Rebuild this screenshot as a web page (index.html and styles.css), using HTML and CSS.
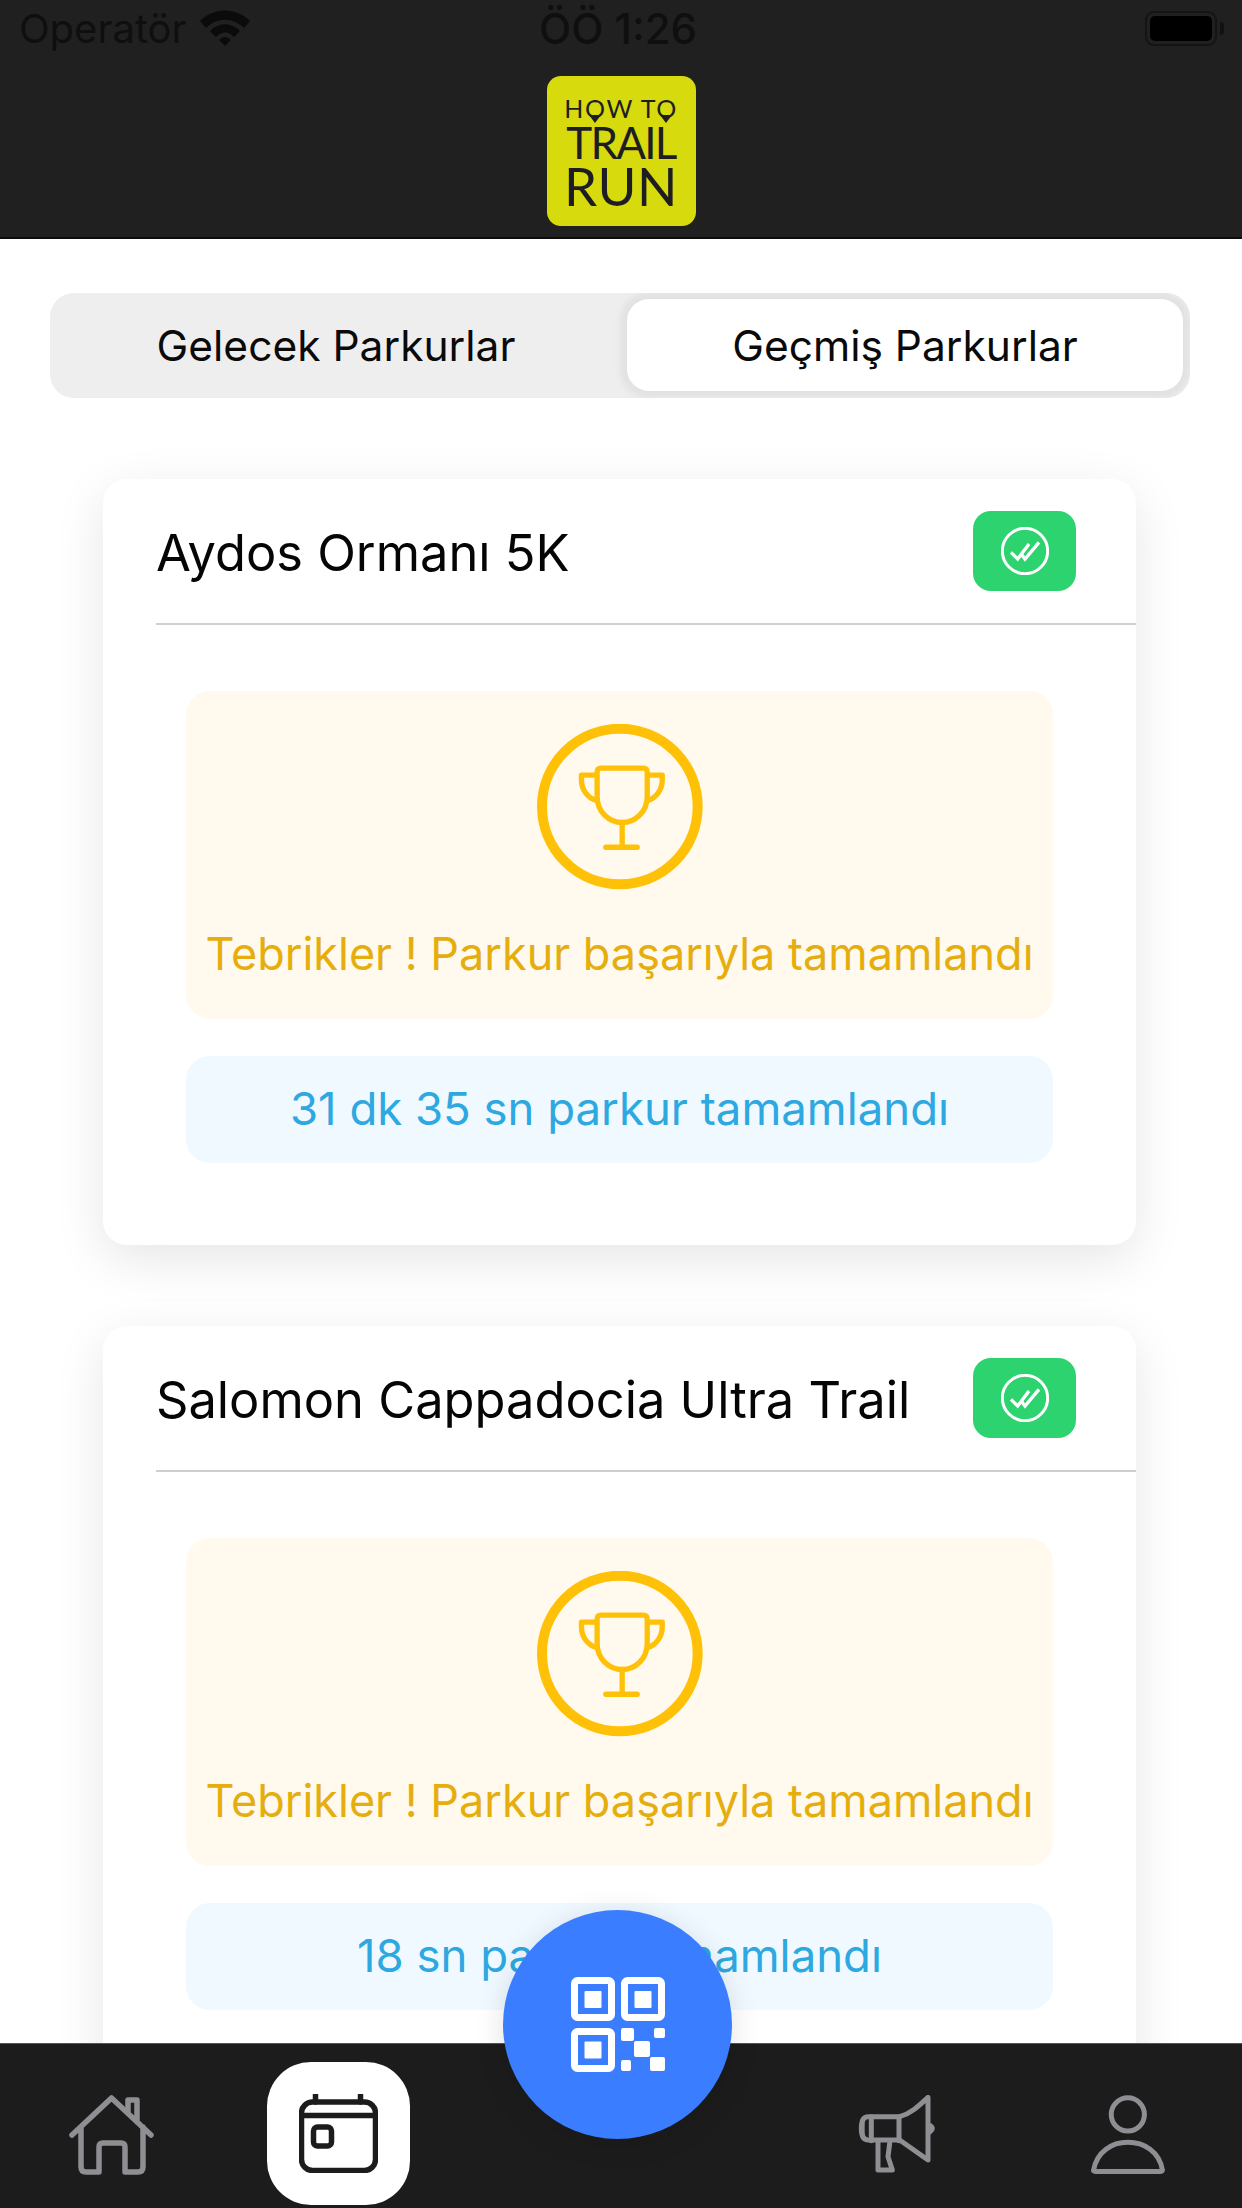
FILE: index.html
```html
<!DOCTYPE html>
<html lang="tr">
<head>
  <meta charset="UTF-8">
  <title>How To Trail Run</title>
  <link rel="stylesheet" href="styles.css">
</head>
<body>
  <svg class="defs" width="0" height="0">
    <symbol id="trophy" viewBox="110 73 497 497">
      <circle cx="358" cy="320" r="233" fill="none" stroke="currentColor" stroke-width="30"/>
      <g fill="none" stroke="currentColor" stroke-width="16" stroke-linecap="round" stroke-linejoin="round">
        <path d="M290 290V217Q290 205 302 205H428Q440 205 440 217V290C440 335 405 368 365 368C325 368 290 335 290 290Z"/>
        <path d="M365 368V442M316 442H410"/>
        <path d="M288 226H243V240C243 270 262 295 288 302M442 226H485V240C485 270 466 295 442 302"/>
      </g>
    </symbol>
    <symbol id="done" viewBox="178 114 144 144">
      <circle cx="250" cy="186" r="68" fill="none" stroke="#fff" stroke-width="9"/>
      <path d="M208 190L228 210L262 165M238 194L250 210L292 160" fill="none" stroke="#fff" stroke-width="10"/>
    </symbol>
  </svg>

  <div class="app">
    <header class="topbar">
      <div class="status">
        <div class="carrier">
          Operatör
          <svg class="wifi" viewBox="0 0 50 36" width="50" height="36">
            <path d="M0 11C14-3 36-3 50 11L44 18C33 7 17 7 6 18Z"/>
            <path d="M10 21C19 12 31 12 40 21L34 27C28 21 22 21 16 27Z"/>
            <path d="M19 30C23 26 27 26 31 30L25 36Z"/>
          </svg>
        </div>
        <div class="clock">ÖÖ 1:26</div>
        <div class="battery"><span class="battery-level"></span></div>
      </div>
      <div class="logo">
        <div class="logo-how">H<span class="pin">O</span>W T<span class="pin">O</span></div>
        <div class="logo-trail">TRAIL</div>
        <div class="logo-run">RUN</div>
      </div>
    </header>

    <main class="content">
      <div class="tabs">
        <div class="tab tab-idle">Gelecek Parkurlar</div>
        <div class="tab tab-active">Geçmiş Parkurlar</div>
      </div>

      <section class="card">
        <div class="card-head">
          <h3 class="card-title">Aydos Ormanı 5K</h3>
          <div class="badge"><svg width="48" height="48"><use href="#done"/></svg></div>
        </div>
        <div class="card-body">
          <div class="congrats">
            <svg class="trophy" width="166" height="166"><use href="#trophy"/></svg>
            <p class="congrats-text">Tebrikler ! Parkur başarıyla tamamlandı</p>
          </div>
          <div class="result">31 dk 35 sn parkur tamamlandı</div>
        </div>
      </section>

      <section class="card">
        <div class="card-head">
          <h3 class="card-title">Salomon Cappadocia Ultra Trail</h3>
          <div class="badge"><svg width="48" height="48"><use href="#done"/></svg></div>
        </div>
        <div class="card-body">
          <div class="congrats">
            <svg class="trophy" width="166" height="166"><use href="#trophy"/></svg>
            <p class="congrats-text">Tebrikler ! Parkur başarıyla tamamlandı</p>
          </div>
          <div class="result">18 sn parkur tamamlandı</div>
        </div>
      </section>
    </main>

    <nav class="tabbar">
      <div class="nav-item">
        <svg class="nav-icon" viewBox="0 0 85 80" width="85" height="80">
          <path d="M3 40L42.5 3L82 40M12 32V72Q12 77 17 77H30V52Q30 48 34 48H52Q56 48 56 52V77H69Q74 77 74 72V32M59 17V5H68V27"/>
        </svg>
      </div>
      <div class="nav-item">
        <div class="nav-active">
          <svg class="nav-icon nav-icon-dark" viewBox="0 0 79 79" width="79" height="79">
            <rect x="2.5" y="8" width="74" height="68.5" rx="11"/>
            <path d="M2.5 21.5H76.5M16.5 1V8M61.5 1V8"/>
            <rect x="14.5" y="33" width="18" height="19" rx="4"/>
          </svg>
        </div>
      </div>
      <div class="nav-gap"></div>
      <div class="nav-item">
        <svg class="nav-icon nav-icon-thick" viewBox="355 345 240 237" width="80" height="79">
          <path d="M385 410H480C515 400 540 375 565 352V540L480 480H385Q365 480 365 445Q365 410 385 410Z"/>
          <path d="M395 410V482M478 410V482"/>
          <path d="M415 485V570H458L445 530L450 490"/>
          <path class="bump" d="M573 432Q592 445 573 460Z"/>
          <path class="bump" d="M372 425Q352 445 372 465Z"/>
        </svg>
      </div>
      <div class="nav-item">
        <svg class="nav-icon nav-icon-thick" viewBox="1052 345 223 237" width="74" height="79">
          <circle cx="1163" cy="403" r="50"/>
          <path d="M1060 570C1070 515 1115 487 1163 487C1212 487 1258 515 1267 570Q1268 575 1260 575H1067Q1058 575 1060 570Z"/>
        </svg>
      </div>
    </nav>

    <button class="scan">
      <svg viewBox="0 0 94 95" width="94" height="95">
        <g fill="none" stroke="#fff" stroke-width="7">
          <rect x="3.5" y="3.5" width="37" height="37" rx="3"/>
          <rect x="53.5" y="3.5" width="37" height="37" rx="3"/>
          <rect x="3.5" y="54.5" width="37" height="37" rx="3"/>
        </g>
        <g fill="#fff">
          <rect x="13.5" y="14" width="17" height="17" rx="1"/>
          <rect x="63.5" y="14" width="17" height="17" rx="1"/>
          <rect x="13.5" y="64.5" width="17" height="17" rx="1"/>
          <rect x="50" y="51" width="13" height="13" rx="2"/>
          <rect x="83" y="51" width="11" height="10" rx="2"/>
          <rect x="63" y="64" width="16" height="16" rx="2"/>
          <rect x="50" y="83" width="10" height="11" rx="2"/>
          <rect x="79" y="80" width="15" height="14" rx="2"/>
        </g>
      </svg>
    </button>
  </div>
</body>
</html>
```

FILE: styles.css
```css
* {
  box-sizing: border-box;
}
body {
  margin: 0;
  font-family: 'Inter', 'Liberation Sans', sans-serif;
  background-color: #fff;
}
.defs {
  position: absolute;
}
.app {
  position: relative;
  display: flex;
  flex-direction: column;
  width: 1242px;
  height: 2208px;
  overflow: hidden;
}

/* top bar */
.topbar {
  height: 239px;
  background-color: #202020;
  border-bottom: 2px solid #0d0d0d;
  display: flex;
  flex-direction: column;
  align-items: center;
}
.status {
  width: 100%;
  height: 76px;
  padding: 0 25px 20px 19px;
  display: grid;
  grid-template-columns: 1fr auto 1fr;
  align-items: center;
  font-size: 40px;
  color: #0f0f0f;
}
.carrier {
  display: flex;
  align-items: center;
  gap: 13px;
}
.wifi {
  fill: #0b0b0b;
}
.clock {
  font-size: 42px;
  font-weight: 500;
}
.battery {
  position: relative;
  justify-self: end;
  width: 72px;
  height: 35px;
  padding: 3px;
  border: 2px solid #141414;
  border-radius: 9px;
}
.battery::after {
  content: "";
  position: absolute;
  right: -9px;
  top: 9px;
  width: 4px;
  height: 13px;
  background-color: #111;
  border-radius: 0 4px 4px 0;
}
.battery-level {
  display: block;
  height: 100%;
  background-color: #000;
  border-radius: 5px;
}
.logo {
  width: 149px;
  height: 150px;
  padding-top: 18px;
  background-color: #d7da0c;
  border-radius: 14px;
  color: #1e1e22;
  font-family: 'Lato', sans-serif;
  display: flex;
  flex-direction: column;
  align-items: center;
}
.logo-how {
  font-size: 25px;
  line-height: 28px;
  letter-spacing: 1.5px;
}
.pin {
  position: relative;
}
.pin::after {
  content: "";
  position: absolute;
  left: 50%;
  bottom: 0;
  margin-left: -7px;
  border-left: 6px solid transparent;
  border-right: 6px solid transparent;
  border-top: 8px solid #1e1e22;
}
.logo-trail {
  font-size: 44px;
  line-height: 41px;
  letter-spacing: -1.8px;
}
.logo-run {
  font-size: 53px;
  line-height: 46px;
  letter-spacing: 0.5px;
}

/* content */
.content {
  flex: 1;
  min-height: 0;
  overflow: hidden;
  padding-top: 54px;
}
.tabs {
  width: 1140px;
  height: 105px;
  margin-left: 50px;
  padding: 6px 7px 7px 0;
  display: flex;
  background-color: #eee;
  border-radius: 24px;
  overflow: hidden;
}
.tab {
  width: 577px;
  display: flex;
  align-items: center;
  justify-content: center;
  font-size: 42.5px;
  color: #0a0a0a;
}
.tab-idle {
  padding-right: 5px;
}
.tab-active {
  width: 556px;
  background-color: #fff;
  border-radius: 22px;
  box-shadow: 0 0 6px 7px #e2e2e2;
}
.card {
  width: 1033px;
  margin: 81px 0 0 103px;
  background-color: #fff;
  border-radius: 24px;
  box-shadow: 0 14px 50px rgba(0, 0, 0, 0.1);
}
.card + .card {
  margin-top: 81px;
}
.card-head {
  height: 146px;
  margin-left: 53px;
  padding: 0 60px 0 0;
  display: flex;
  align-items: center;
  justify-content: space-between;
  border-bottom: 2px solid #cfcfd1;
}
.card-title {
  margin: 0;
  padding-top: 2px;
  font-size: 50.6px;
  font-weight: 400;
  color: #050505;
}
.badge {
  width: 103px;
  height: 80px;
  display: flex;
  align-items: center;
  justify-content: center;
  background-color: #2dd36f;
  border-radius: 18px;
}
.card-body {
  padding: 66px 83px 82px;
}
.congrats {
  height: 328px;
  padding-top: 33px;
  display: flex;
  flex-direction: column;
  align-items: center;
  background-color: #fffaed;
  border-radius: 24px;
}
.trophy {
  color: #ffc107;
}
.congrats-text {
  margin: 36px 0 0;
  font-size: 45px;
  color: #e5ae0e;
  white-space: nowrap;
}
.result {
  height: 107px;
  margin-top: 37px;
  padding-bottom: 2px;
  display: flex;
  align-items: center;
  justify-content: center;
  background-color: #f0f9ff;
  border-radius: 24px;
  font-size: 45.5px;
  color: #2ea8e0;
}

/* bottom bar */
.tabbar {
  height: 165px;
  flex: none;
  padding-top: 18px;
  display: grid;
  grid-template-columns: 223px 230px 329px 232px 228px;
  align-items: start;
  background-color: #1c1c1c;
  border-top: 1px solid #555;
}
.nav-item {
  display: flex;
  justify-content: center;
}
.nav-icon {
  display: block;
  fill: none;
  stroke: #8e8e93;
  stroke-width: 5.5;
  stroke-linecap: round;
  stroke-linejoin: round;
  margin-top: 33px;
}
.nav-icon-thick {
  stroke-width: 15;
}
.bump {
  fill: #8e8e93;
  stroke-width: 6;
}
.nav-icon-dark {
  stroke: #1c1c1c;
  margin-top: 0;
}
.nav-active {
  width: 143px;
  height: 143px;
  display: flex;
  align-items: center;
  justify-content: center;
  background-color: #fff;
  border-radius: 44px;
}
.scan {
  position: absolute;
  left: 503px;
  top: 1910px;
  width: 229px;
  height: 229px;
  padding: 0;
  display: flex;
  align-items: center;
  justify-content: center;
  background-color: #3a7eff;
  border: none;
  border-radius: 50%;
  box-shadow: 0 4px 30px rgba(0, 0, 0, 0.12);
}
```
